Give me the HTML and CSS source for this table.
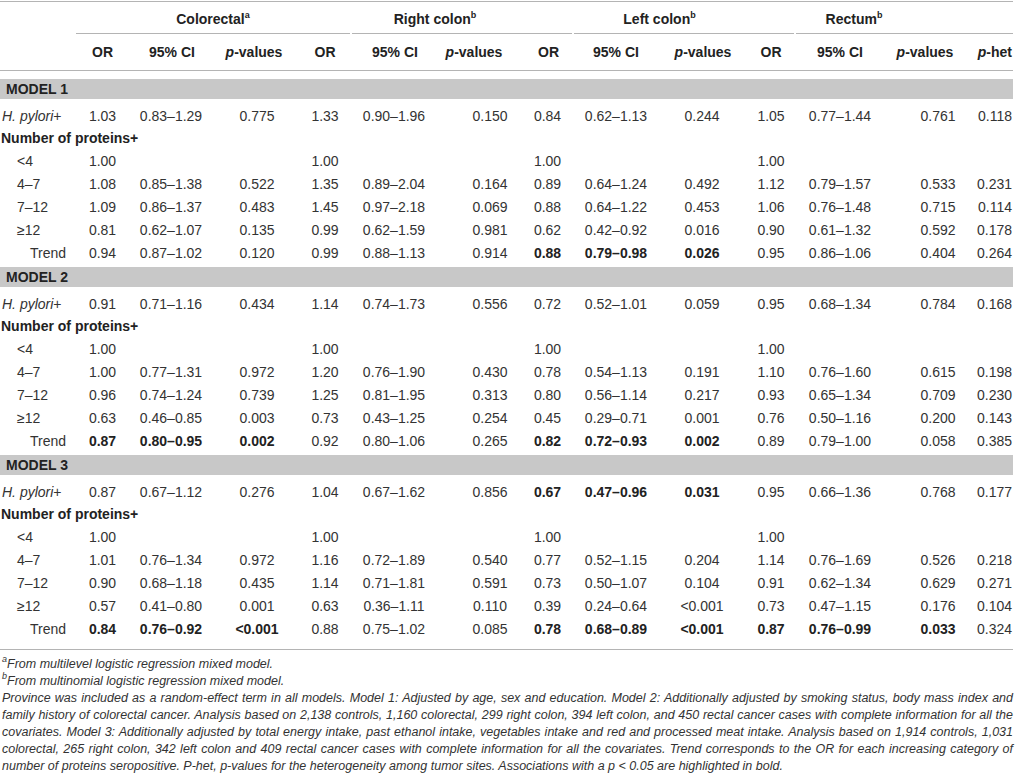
FILE: index.html
```html
<!DOCTYPE html>
<html lang="en">
<head>
<meta charset="utf-8">
<title>Table</title>
<link rel="stylesheet" href="styles.css">
</head>
<body>
<div class="page">
  <div class="tbl">
    <div class="head1">
      <div class="g0"></div>
      <div class="grp g-cr">Colorectal<sup>a</sup></div>
      <div class="grp g-rc">Right colon<sup>b</sup></div>
      <div class="grp g-lc">Left colon<sup>b</sup></div>
      <div class="grp g-re">Rectum<sup>b</sup></div>
    </div>
    <div class="row head2">
      <div></div><div>OR</div><div>95% CI</div><div><i>p</i>-values</div>
      <div>OR</div><div>95% CI</div><div><i>p</i>-values</div>
      <div>OR</div><div>95% CI</div><div><i>p</i>-values</div>
      <div>OR</div><div>95% CI</div><div><i>p</i>-values</div>
      <div><i>p</i>-het</div>
    </div>

    <div class="body">
      <div class="model">MODEL 1</div>
      <div class="row hp"><div class="lbl"><i>H. pylori</i>+</div><div>1.03</div><div>0.83–1.29</div><div>0.775</div><div>1.33</div><div>0.90–1.96</div><div>0.150</div><div>0.84</div><div>0.62–1.13</div><div>0.244</div><div>1.05</div><div>0.77–1.44</div><div>0.761</div><div>0.118</div></div>
      <div class="sub">Number of proteins+</div>
      <div class="row"><div class="lbl ind">&lt;4</div><div>1.00</div><div></div><div></div><div>1.00</div><div></div><div></div><div>1.00</div><div></div><div></div><div>1.00</div><div></div><div></div><div></div></div>
      <div class="row"><div class="lbl ind">4–7</div><div>1.08</div><div>0.85–1.38</div><div>0.522</div><div>1.35</div><div>0.89–2.04</div><div>0.164</div><div>0.89</div><div>0.64–1.24</div><div>0.492</div><div>1.12</div><div>0.79–1.57</div><div>0.533</div><div>0.231</div></div>
      <div class="row"><div class="lbl ind">7–12</div><div>1.09</div><div>0.86–1.37</div><div>0.483</div><div>1.45</div><div>0.97–2.18</div><div>0.069</div><div>0.88</div><div>0.64–1.22</div><div>0.453</div><div>1.06</div><div>0.76–1.48</div><div>0.715</div><div>0.114</div></div>
      <div class="row"><div class="lbl ind">≥12</div><div>0.81</div><div>0.62–1.07</div><div>0.135</div><div>0.99</div><div>0.62–1.59</div><div>0.981</div><div>0.62</div><div>0.42–0.92</div><div>0.016</div><div>0.90</div><div>0.61–1.32</div><div>0.592</div><div>0.178</div></div>
      <div class="row"><div class="lbl trend">Trend</div><div>0.94</div><div>0.87–1.02</div><div>0.120</div><div>0.99</div><div>0.88–1.13</div><div>0.914</div><div class="b">0.88</div><div class="b">0.79–0.98</div><div class="b">0.026</div><div>0.95</div><div>0.86–1.06</div><div>0.404</div><div>0.264</div></div>

      <div class="model next">MODEL 2</div>
      <div class="row hp"><div class="lbl"><i>H. pylori</i>+</div><div>0.91</div><div>0.71–1.16</div><div>0.434</div><div>1.14</div><div>0.74–1.73</div><div>0.556</div><div>0.72</div><div>0.52–1.01</div><div>0.059</div><div>0.95</div><div>0.68–1.34</div><div>0.784</div><div>0.168</div></div>
      <div class="sub">Number of proteins+</div>
      <div class="row"><div class="lbl ind">&lt;4</div><div>1.00</div><div></div><div></div><div>1.00</div><div></div><div></div><div>1.00</div><div></div><div></div><div>1.00</div><div></div><div></div><div></div></div>
      <div class="row"><div class="lbl ind">4–7</div><div>1.00</div><div>0.77–1.31</div><div>0.972</div><div>1.20</div><div>0.76–1.90</div><div>0.430</div><div>0.78</div><div>0.54–1.13</div><div>0.191</div><div>1.10</div><div>0.76–1.60</div><div>0.615</div><div>0.198</div></div>
      <div class="row"><div class="lbl ind">7–12</div><div>0.96</div><div>0.74–1.24</div><div>0.739</div><div>1.25</div><div>0.81–1.95</div><div>0.313</div><div>0.80</div><div>0.56–1.14</div><div>0.217</div><div>0.93</div><div>0.65–1.34</div><div>0.709</div><div>0.230</div></div>
      <div class="row"><div class="lbl ind">≥12</div><div>0.63</div><div>0.46–0.85</div><div>0.003</div><div>0.73</div><div>0.43–1.25</div><div>0.254</div><div>0.45</div><div>0.29–0.71</div><div>0.001</div><div>0.76</div><div>0.50–1.16</div><div>0.200</div><div>0.143</div></div>
      <div class="row"><div class="lbl trend">Trend</div><div class="b">0.87</div><div class="b">0.80–0.95</div><div class="b">0.002</div><div>0.92</div><div>0.80–1.06</div><div>0.265</div><div class="b">0.82</div><div class="b">0.72–0.93</div><div class="b">0.002</div><div>0.89</div><div>0.79–1.00</div><div>0.058</div><div>0.385</div></div>

      <div class="model next">MODEL 3</div>
      <div class="row hp"><div class="lbl"><i>H. pylori</i>+</div><div>0.87</div><div>0.67–1.12</div><div>0.276</div><div>1.04</div><div>0.67–1.62</div><div>0.856</div><div class="b">0.67</div><div class="b">0.47–0.96</div><div class="b">0.031</div><div>0.95</div><div>0.66–1.36</div><div>0.768</div><div>0.177</div></div>
      <div class="sub">Number of proteins+</div>
      <div class="row"><div class="lbl ind">&lt;4</div><div>1.00</div><div></div><div></div><div>1.00</div><div></div><div></div><div>1.00</div><div></div><div></div><div>1.00</div><div></div><div></div><div></div></div>
      <div class="row"><div class="lbl ind">4–7</div><div>1.01</div><div>0.76–1.34</div><div>0.972</div><div>1.16</div><div>0.72–1.89</div><div>0.540</div><div>0.77</div><div>0.52–1.15</div><div>0.204</div><div>1.14</div><div>0.76–1.69</div><div>0.526</div><div>0.218</div></div>
      <div class="row"><div class="lbl ind">7–12</div><div>0.90</div><div>0.68–1.18</div><div>0.435</div><div>1.14</div><div>0.71–1.81</div><div>0.591</div><div>0.73</div><div>0.50–1.07</div><div>0.104</div><div>0.91</div><div>0.62–1.34</div><div>0.629</div><div>0.271</div></div>
      <div class="row"><div class="lbl ind">≥12</div><div>0.57</div><div>0.41–0.80</div><div>0.001</div><div>0.63</div><div>0.36–1.11</div><div>0.110</div><div>0.39</div><div>0.24–0.64</div><div>&lt;0.001</div><div>0.73</div><div>0.47–1.15</div><div>0.176</div><div>0.104</div></div>
      <div class="row"><div class="lbl trend">Trend</div><div class="b">0.84</div><div class="b">0.76–0.92</div><div class="b">&lt;0.001</div><div>0.88</div><div>0.75–1.02</div><div>0.085</div><div class="b">0.78</div><div class="b">0.68–0.89</div><div class="b">&lt;0.001</div><div class="b">0.87</div><div class="b">0.76–0.99</div><div class="b">0.033</div><div>0.324</div></div>
    </div>
  </div>

  <div class="notes">
    <p class="ln"><sup>a</sup>From multilevel logistic regression mixed model.</p>
    <p class="ln"><sup>b</sup>From multinomial logistic regression mixed model.</p>
    <p class="ln just">Province was included as a random-effect term in all models. Model 1: Adjusted by age, sex and education. Model 2: Additionally adjusted by smoking status, body mass index and</p>
    <p class="ln just">family history of colorectal cancer. Analysis based on 2,138 controls, 1,160 colorectal, 299 right colon, 394 left colon, and 450 rectal cancer cases with complete information for all the</p>
    <p class="ln just">covariates. Model 3: Additionally adjusted by total energy intake, past ethanol intake, vegetables intake and red and processed meat intake. Analysis based on 1,914 controls, 1,031</p>
    <p class="ln just">colorectal, 265 right colon, 342 left colon and 409 rectal cancer cases with complete information for all the covariates. Trend corresponds to the OR for each increasing category of</p>
    <p class="ln">number of proteins seropositive. P-het, p-values for the heterogeneity among tumor sites. Associations with a p &lt; 0.05 are highlighted in bold.</p>
  </div>
</div>
</body>
</html>
```

FILE: styles.css
```css
html, body {
  margin: 0;
  padding: 0;
  background: #ffffff;
}

body {
  font-family: "Liberation Sans", Arial, Helvetica, sans-serif;
  font-size: 14px;
  color: #333333;
}

.page {
  width: 1013px;
  padding-top: 1px;
}

.tbl {
  border-top: 1px solid #b4b4b4;
  border-bottom: 1px solid #b4b4b4;
  padding-bottom: 8px;
}

/* ---------- header row 1: column groups ---------- */
.head1 {
  display: grid;
  grid-template-columns: 74px 274px 220px 220px 1fr;
  column-gap: 2px;
  font-weight: bold;
  color: #222222;
}

.grp {
  padding: 7px 0 4px;
  line-height: 20px;
  text-align: center;
  border-bottom: 1px solid #b4b4b4;
  white-space: nowrap;
}

.grp sup,
.notes sup {
  font-size: 9px;
  line-height: 0;
  vertical-align: 6px;
}

.g-rc { padding-right: 54px; }
.g-lc { padding-right: 49px; }
.g-re { padding-right: 101px; }

/* ---------- shared column grid ---------- */
.row {
  display: grid;
  grid-template-columns: 68px 69px 77px 77px 68px 83px 77px 63px 78px 77px 68px 84px 79px 1fr;
}

.row > div {
  text-align: center;
  line-height: 23px;
  white-space: nowrap;
}

/* body column centring offsets */
.row > div:nth-child(3)  { padding-right: 9px; }
.row > div:nth-child(4)  { padding-left: 9px; }
.row > div:nth-child(6)  { padding-right: 13px; }
.row > div:nth-child(7)  { padding-left: 19px; }
.row > div:nth-child(8)  { padding-right: 6px; }
.row > div:nth-child(9)  { padding-right: 10px; }
.row > div:nth-child(10) { padding-left: 7px; }
.row > div:nth-child(12) { padding-right: 14px; }
.row > div:nth-child(13) { padding-left: 19px; }
.row > div:nth-child(14) { text-align: right; padding-right: 1px; }

/* ---------- header row 2 ---------- */
.head2 {
  font-weight: bold;
  color: #222222;
  border-bottom: 1px solid #b4b4b4;
}

.head2 > div {
  padding-top: 8px;
  padding-bottom: 8px;
  line-height: 20px;
}

.head2 > div:nth-child(3)  { padding-left: 0; padding-right: 7px; }
.head2 > div:nth-child(4)  { padding-left: 3px; padding-right: 0; }
.head2 > div:nth-child(6)  { padding-left: 0; padding-right: 11px; }
.head2 > div:nth-child(7)  { padding-left: 0; padding-right: 13px; }
.head2 > div:nth-child(8)  { padding-left: 0; padding-right: 4px; }
.head2 > div:nth-child(9)  { padding-left: 0; padding-right: 10px; }
.head2 > div:nth-child(10) { padding-left: 9px; padding-right: 0; }
.head2 > div:nth-child(12) { padding-left: 0; padding-right: 14px; }
.head2 > div:nth-child(13) { padding-left: 0; padding-right: 7px; }
.head2 > div:nth-child(14) { text-align: right; padding-right: 1px; }

/* ---------- body ---------- */
.body {
  margin-top: 8px;
}

.model {
  height: 20px;
  line-height: 20px;
  background: #c8c8c8;
  font-weight: bold;
  color: #222222;
  padding-left: 6px;
}

.model.next {
  margin-top: 2px;
}

.row.hp > div {
  padding-top: 7px;
  line-height: 21px;
}

.sub {
  line-height: 23px;
  font-weight: bold;
  color: #222222;
  padding-left: 1px;
}

.row > .lbl {
  text-align: left;
  padding-left: 2px;
  padding-right: 0;
}

.row > .lbl.ind { padding-left: 17px; }
.row > .lbl.trend { padding-left: 30px; }

.row > .b {
  font-weight: bold;
  color: #222222;
}

/* ---------- footnotes ---------- */
.notes {
  padding-top: 6px;
  font-size: 12.5px;
  font-style: italic;
  line-height: 17px;
  color: #333333;
}

.ln {
  margin: 0;
  padding-left: 2px;
  white-space: nowrap;
}

.ln.just {
  text-align: justify;
  text-align-last: justify;
}
```
